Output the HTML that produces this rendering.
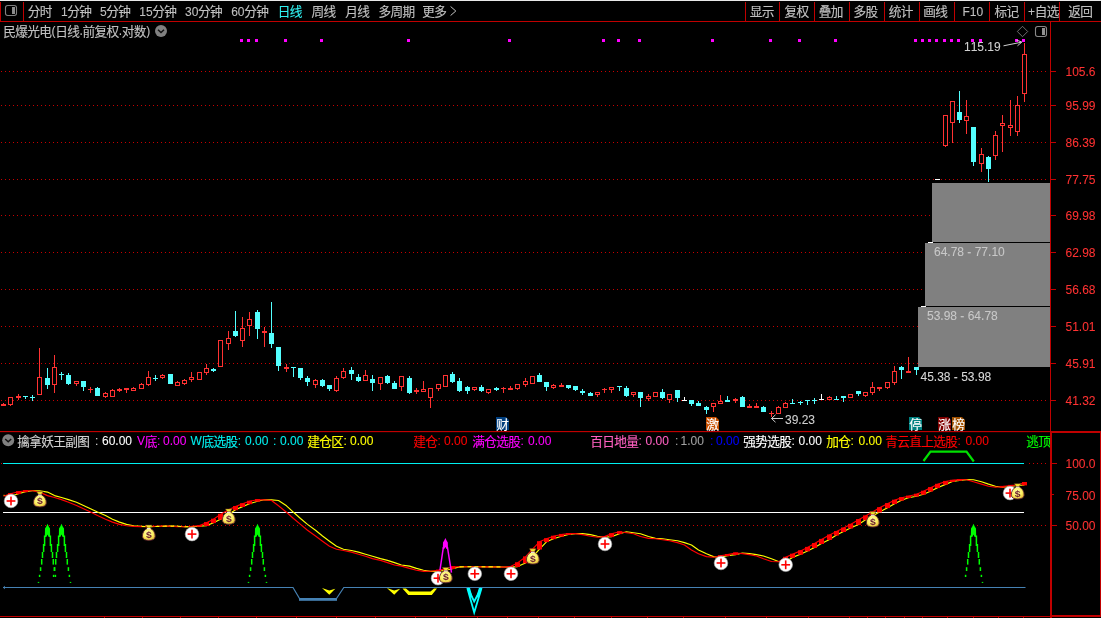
<!DOCTYPE html>
<html><head><meta charset="utf-8"><title>chart</title>
<style>html,body{margin:0;padding:0;background:#000;overflow:hidden}svg{display:block;will-change:transform}text{font-family:"Liberation Sans","Noto Sans CJK SC",sans-serif;font-kerning:none}</style>
</head><body>
<svg width="1101" height="618" viewBox="0 0 1101 618" shape-rendering="auto">
<rect x="0" y="0" width="1101" height="618" fill="#000" />
<rect x="0" y="0" width="1101" height="1" fill="#e8e8e8" />
<rect x="0" y="21" width="1101" height="1" fill="#c00000" />
<rect x="0" y="2" width="1" height="20" fill="#c00000" />
<rect x="23" y="2" width="1" height="20" fill="#c00000" />
<rect x="745" y="2" width="1" height="20" fill="#c00000" />
<rect x="779" y="2" width="1" height="20" fill="#c00000" />
<rect x="814" y="2" width="1" height="20" fill="#c00000" />
<rect x="849" y="2" width="1" height="20" fill="#c00000" />
<rect x="884" y="2" width="1" height="20" fill="#c00000" />
<rect x="919" y="2" width="1" height="20" fill="#c00000" />
<rect x="954" y="2" width="1" height="20" fill="#c00000" />
<rect x="989" y="2" width="1" height="20" fill="#c00000" />
<rect x="1024" y="2" width="1" height="20" fill="#c00000" />
<rect x="1059" y="2" width="1" height="20" fill="#c00000" />
<rect x="5.5" y="5.5" width="11" height="10" rx="2.2" fill="none" stroke="#808080" stroke-width="1.1"/>
<rect x="12" y="7" width="3" height="7" fill="#8c8c8c" />
<text x="27.67 39.67" y="16.40" font-size="12.66" fill="#c0c0c0" stroke="#c0c0c0" stroke-width="0.14">分时</text>
<text x="61.00" y="16.00" font-size="12" fill="#c0c0c0" stroke="#c0c0c0" stroke-width="0.08"  xml:space="preserve">1</text>
<text x="67.34 79.34" y="16.40" font-size="12.66" fill="#c0c0c0" stroke="#c0c0c0" stroke-width="0.14">分钟</text>
<text x="100.00" y="16.00" font-size="12" fill="#c0c0c0" stroke="#c0c0c0" stroke-width="0.08"  xml:space="preserve">5</text>
<text x="106.34 118.34" y="16.40" font-size="12.66" fill="#c0c0c0" stroke="#c0c0c0" stroke-width="0.14">分钟</text>
<text x="139.30" y="16.00" font-size="12" fill="#c0c0c0" stroke="#c0c0c0" stroke-width="0.08"  xml:space="preserve">15</text>
<text x="152.32 164.32" y="16.40" font-size="12.66" fill="#c0c0c0" stroke="#c0c0c0" stroke-width="0.14">分钟</text>
<text x="185.00" y="16.00" font-size="12" fill="#c0c0c0" stroke="#c0c0c0" stroke-width="0.08"  xml:space="preserve">30</text>
<text x="198.02 210.02" y="16.40" font-size="12.66" fill="#c0c0c0" stroke="#c0c0c0" stroke-width="0.14">分钟</text>
<text x="231.20" y="16.00" font-size="12" fill="#c0c0c0" stroke="#c0c0c0" stroke-width="0.08"  xml:space="preserve">60</text>
<text x="244.22 256.22" y="16.40" font-size="12.66" fill="#c0c0c0" stroke="#c0c0c0" stroke-width="0.14">分钟</text>
<text x="277.87 289.87" y="16.40" font-size="12.66" fill="#30f0f0" stroke="#30f0f0" stroke-width="0.14">日线</text>
<text x="311.47 323.47" y="16.40" font-size="12.66" fill="#c0c0c0" stroke="#c0c0c0" stroke-width="0.14">周线</text>
<text x="345.17 357.17" y="16.40" font-size="12.66" fill="#c0c0c0" stroke="#c0c0c0" stroke-width="0.14">月线</text>
<text x="378.47 390.47 402.47" y="16.40" font-size="12.66" fill="#c0c0c0" stroke="#c0c0c0" stroke-width="0.14">多周期</text>
<text x="422.17 434.17" y="16.40" font-size="12.66" fill="#c0c0c0" stroke="#c0c0c0" stroke-width="0.14">更多</text>
<polyline points="450.6,6.5 455.8,11 450.6,15.5" fill="none" stroke="#c0c0c0" stroke-width="1"/>
<text x="749.67 761.67" y="16.40" font-size="12.66" fill="#c0c0c0" stroke="#c0c0c0" stroke-width="0.14">显示</text>
<text x="784.47 796.47" y="16.40" font-size="12.66" fill="#c0c0c0" stroke="#c0c0c0" stroke-width="0.14">复权</text>
<text x="818.67 830.67" y="16.40" font-size="12.66" fill="#c0c0c0" stroke="#c0c0c0" stroke-width="0.14">叠加</text>
<text x="853.47 865.47" y="16.40" font-size="12.66" fill="#c0c0c0" stroke="#c0c0c0" stroke-width="0.14">多股</text>
<text x="888.67 900.67" y="16.40" font-size="12.66" fill="#c0c0c0" stroke="#c0c0c0" stroke-width="0.14">统计</text>
<text x="923.37 935.37" y="16.40" font-size="12.66" fill="#c0c0c0" stroke="#c0c0c0" stroke-width="0.14">画线</text>
<text x="962.50" y="16.00" font-size="12" fill="#c0c0c0" stroke="#c0c0c0" stroke-width="0.08"  xml:space="preserve">F10</text>
<text x="994.47 1006.47" y="16.40" font-size="12.66" fill="#c0c0c0" stroke="#c0c0c0" stroke-width="0.14">标记</text>
<text x="1028.00" y="16.00" font-size="12" fill="#c0c0c0" stroke="#c0c0c0" stroke-width="0.08"  xml:space="preserve">+</text>
<text x="1034.68 1046.68" y="16.40" font-size="12.66" fill="#c0c0c0" stroke="#c0c0c0" stroke-width="0.14">自选</text>
<text x="1068.17 1080.17" y="16.40" font-size="12.66" fill="#c0c0c0" stroke="#c0c0c0" stroke-width="0.14">返回</text>
<text x="3.17 15.17 27.17 39.17" y="35.80" font-size="12.66" fill="#c0c0c0" stroke="#c0c0c0" stroke-width="0.14">民爆光电</text>
<text x="51.50" y="35.40" font-size="12" fill="#c0c0c0" stroke="#c0c0c0" stroke-width="0.08"  xml:space="preserve">(</text>
<text x="55.17 67.17" y="35.80" font-size="12.66" fill="#c0c0c0" stroke="#c0c0c0" stroke-width="0.14">日线</text>
<text x="79.50" y="35.40" font-size="12" fill="#c0c0c0" stroke="#c0c0c0" stroke-width="0.08"  xml:space="preserve">.</text>
<text x="82.50 94.50 106.50" y="35.80" font-size="12.66" fill="#c0c0c0" stroke="#c0c0c0" stroke-width="0.14">前复权</text>
<text x="118.83" y="35.40" font-size="12" fill="#c0c0c0" stroke="#c0c0c0" stroke-width="0.08"  xml:space="preserve">.</text>
<text x="121.83 133.83" y="35.80" font-size="12.66" fill="#c0c0c0" stroke="#c0c0c0" stroke-width="0.14">对数</text>
<text x="146.16" y="35.40" font-size="12" fill="#c0c0c0" stroke="#c0c0c0" stroke-width="0.08"  xml:space="preserve">)</text>
<circle cx="161" cy="31" r="6" fill="#808080"/>
<polyline points="158,29.7 161,32.6 164,29.7" fill="none" stroke="#101010" stroke-width="1.4"/>
<rect x="240" y="39" width="3" height="3" fill="#ff00ff" />
<rect x="247" y="39" width="3" height="3" fill="#ff00ff" />
<rect x="255" y="39" width="3" height="3" fill="#ff00ff" />
<rect x="284" y="39" width="3" height="3" fill="#ff00ff" />
<rect x="320" y="39" width="3" height="3" fill="#ff00ff" />
<rect x="407" y="39" width="3" height="3" fill="#ff00ff" />
<rect x="508" y="39" width="3" height="3" fill="#ff00ff" />
<rect x="602" y="39" width="3" height="3" fill="#ff00ff" />
<rect x="617" y="39" width="3" height="3" fill="#ff00ff" />
<rect x="638" y="39" width="3" height="3" fill="#ff00ff" />
<rect x="711" y="39" width="3" height="3" fill="#ff00ff" />
<rect x="769" y="39" width="3" height="3" fill="#ff00ff" />
<rect x="798" y="39" width="3" height="3" fill="#ff00ff" />
<rect x="834" y="39" width="3" height="3" fill="#ff00ff" />
<rect x="914" y="39" width="3" height="3" fill="#ff00ff" />
<rect x="921" y="39" width="3" height="3" fill="#ff00ff" />
<rect x="928" y="39" width="3" height="3" fill="#ff00ff" />
<rect x="935" y="39" width="3" height="3" fill="#ff00ff" />
<rect x="943" y="39" width="3" height="3" fill="#ff00ff" />
<rect x="950" y="39" width="3" height="3" fill="#ff00ff" />
<rect x="957" y="39" width="3" height="3" fill="#ff00ff" />
<rect x="971" y="39" width="3" height="3" fill="#ff00ff" />
<rect x="979" y="39" width="3" height="3" fill="#ff00ff" />
<rect x="1015" y="39" width="3" height="3" fill="#ff00ff" />
<rect x="1022" y="39" width="3" height="3" fill="#ff00ff" />
<line x1="1" y1="71.5" x2="1046" y2="71.5" stroke="#c80000" stroke-width="1" stroke-dasharray="1 3"/>
<line x1="1" y1="105.5" x2="1046" y2="105.5" stroke="#c80000" stroke-width="1" stroke-dasharray="1 3"/>
<line x1="1" y1="142.5" x2="1046" y2="142.5" stroke="#c80000" stroke-width="1" stroke-dasharray="1 3"/>
<line x1="1" y1="179.5" x2="1046" y2="179.5" stroke="#c80000" stroke-width="1" stroke-dasharray="1 3"/>
<line x1="1" y1="215.5" x2="1046" y2="215.5" stroke="#c80000" stroke-width="1" stroke-dasharray="1 3"/>
<line x1="1" y1="252.5" x2="1046" y2="252.5" stroke="#c80000" stroke-width="1" stroke-dasharray="1 3"/>
<line x1="1" y1="289.5" x2="1046" y2="289.5" stroke="#c80000" stroke-width="1" stroke-dasharray="1 3"/>
<line x1="1" y1="326.5" x2="1046" y2="326.5" stroke="#c80000" stroke-width="1" stroke-dasharray="1 3"/>
<line x1="1" y1="363.5" x2="1046" y2="363.5" stroke="#c80000" stroke-width="1" stroke-dasharray="1 3"/>
<line x1="1" y1="400.5" x2="1046" y2="400.5" stroke="#c80000" stroke-width="1" stroke-dasharray="1 3"/>
<rect x="932" y="183" width="118" height="59" fill="#808080" />
<rect x="925" y="243" width="125" height="63" fill="#808080" />
<rect x="918" y="307" width="132" height="60" fill="#808080" />
<rect x="921" y="306" width="5" height="1" fill="#ffffff" />
<rect x="928" y="242" width="5" height="1" fill="#ffffff" />
<rect x="935" y="179" width="5" height="1" fill="#ffffff" />
<text x="934.00" y="256.00" font-size="12" fill="#c8c8c8" stroke="#c8c8c8" stroke-width="0.08"  xml:space="preserve">64.78 - 77.10</text>
<text x="927.00" y="320.00" font-size="12" fill="#c8c8c8" stroke="#c8c8c8" stroke-width="0.08"  xml:space="preserve">53.98 - 64.78</text>
<text x="920.50" y="380.70" font-size="12" fill="#d8d8d8" stroke="#d8d8d8" stroke-width="0.08"  xml:space="preserve">45.38 - 53.98</text>
<rect x="1050" y="22" width="1" height="410" fill="#c00000" />
<rect x="1051" y="71" width="5" height="1" fill="#c00000" />
<text x="1065.50" y="75.80" font-size="12" fill="#ff3232" stroke="#ff3232" stroke-width="0.08"  xml:space="preserve">105.6</text>
<rect x="1051" y="105" width="5" height="1" fill="#c00000" />
<text x="1065.50" y="109.80" font-size="12" fill="#ff3232" stroke="#ff3232" stroke-width="0.08"  xml:space="preserve">95.99</text>
<rect x="1051" y="142" width="5" height="1" fill="#c00000" />
<text x="1065.50" y="146.80" font-size="12" fill="#ff3232" stroke="#ff3232" stroke-width="0.08"  xml:space="preserve">86.39</text>
<rect x="1051" y="179" width="5" height="1" fill="#c00000" />
<text x="1065.50" y="183.80" font-size="12" fill="#ff3232" stroke="#ff3232" stroke-width="0.08"  xml:space="preserve">77.75</text>
<rect x="1051" y="215" width="5" height="1" fill="#c00000" />
<text x="1065.50" y="219.80" font-size="12" fill="#ff3232" stroke="#ff3232" stroke-width="0.08"  xml:space="preserve">69.98</text>
<rect x="1051" y="252" width="5" height="1" fill="#c00000" />
<text x="1065.50" y="256.80" font-size="12" fill="#ff3232" stroke="#ff3232" stroke-width="0.08"  xml:space="preserve">62.98</text>
<rect x="1051" y="289" width="5" height="1" fill="#c00000" />
<text x="1065.50" y="293.80" font-size="12" fill="#ff3232" stroke="#ff3232" stroke-width="0.08"  xml:space="preserve">56.68</text>
<rect x="1051" y="326" width="5" height="1" fill="#c00000" />
<text x="1065.50" y="330.80" font-size="12" fill="#ff3232" stroke="#ff3232" stroke-width="0.08"  xml:space="preserve">51.01</text>
<rect x="1051" y="363" width="5" height="1" fill="#c00000" />
<text x="1065.50" y="367.80" font-size="12" fill="#ff3232" stroke="#ff3232" stroke-width="0.08"  xml:space="preserve">45.91</text>
<rect x="1051" y="400" width="5" height="1" fill="#c00000" />
<text x="1065.50" y="404.80" font-size="12" fill="#ff3232" stroke="#ff3232" stroke-width="0.08"  xml:space="preserve">41.32</text>
<rect x="3" y="403" width="1" height="3" fill="#ff3232" />
<rect x="1" y="404" width="5" height="2" fill="#ff3232" />
<rect x="10" y="405" width="1" height="1" fill="#ff3232" />
<rect x="8.5" y="397.5" width="4" height="7" fill="#000" stroke="#ff3232" stroke-width="1"/>
<rect x="18" y="394" width="1" height="6" fill="#ff3232" />
<rect x="16" y="396" width="5" height="2" fill="#ff3232" />
<rect x="25" y="396" width="1" height="3" fill="#54ffff" />
<rect x="23" y="396" width="5" height="1" fill="#54ffff" />
<rect x="32" y="395" width="1" height="6" fill="#54ffff" />
<rect x="30" y="397" width="5" height="1" fill="#54ffff" />
<rect x="39" y="348" width="1" height="29" fill="#ff3232" />
<rect x="37.5" y="377.5" width="4" height="17" fill="#000" stroke="#ff3232" stroke-width="1"/>
<rect x="47" y="368" width="1" height="21" fill="#54ffff" />
<rect x="45" y="378" width="5" height="7" fill="#54ffff" />
<rect x="54" y="355" width="1" height="12" fill="#ff3232" />
<rect x="54" y="385" width="1" height="8" fill="#ff3232" />
<rect x="52.5" y="367.5" width="4" height="17" fill="#000" stroke="#ff3232" stroke-width="1"/>
<rect x="61" y="372" width="1" height="8" fill="#54ffff" />
<rect x="59" y="374" width="5" height="1" fill="#54ffff" />
<rect x="68" y="373" width="1" height="12" fill="#54ffff" />
<rect x="66" y="375" width="5" height="9" fill="#54ffff" />
<rect x="76" y="384" width="1" height="2" fill="#ff3232" />
<rect x="74.5" y="381.5" width="4" height="2" fill="#000" stroke="#ff3232" stroke-width="1"/>
<rect x="83" y="381" width="1" height="10" fill="#54ffff" />
<rect x="81" y="381" width="5" height="6" fill="#54ffff" />
<rect x="90" y="387" width="1" height="6" fill="#ff3232" />
<rect x="88" y="389" width="5" height="1" fill="#ff3232" />
<rect x="97" y="387" width="1" height="9" fill="#54ffff" />
<rect x="95" y="388" width="5" height="8" fill="#54ffff" />
<rect x="105" y="392" width="1" height="1" fill="#ff3232" />
<rect x="105" y="397" width="1" height="1" fill="#ff3232" />
<rect x="103.5" y="393.5" width="4" height="3" fill="#000" stroke="#ff3232" stroke-width="1"/>
<rect x="112" y="389" width="1" height="1" fill="#ff3232" />
<rect x="110.5" y="390.5" width="4" height="6" fill="#000" stroke="#ff3232" stroke-width="1"/>
<rect x="119" y="388" width="1" height="4" fill="#ff3232" />
<rect x="117" y="389" width="5" height="2" fill="#ff3232" />
<rect x="126" y="388" width="1" height="5" fill="#ff3232" />
<rect x="124" y="388" width="5" height="2" fill="#ff3232" />
<rect x="133" y="387" width="1" height="1" fill="#ff3232" />
<rect x="131.5" y="388.5" width="4" height="2" fill="#000" stroke="#ff3232" stroke-width="1"/>
<rect x="141" y="383" width="1" height="1" fill="#ff3232" />
<rect x="139.5" y="384.5" width="4" height="4" fill="#000" stroke="#ff3232" stroke-width="1"/>
<rect x="148" y="371" width="1" height="6" fill="#ff3232" />
<rect x="148" y="385" width="1" height="1" fill="#ff3232" />
<rect x="146.5" y="377.5" width="4" height="7" fill="#000" stroke="#ff3232" stroke-width="1"/>
<rect x="155" y="375" width="1" height="6" fill="#54ffff" />
<rect x="153" y="378" width="5" height="1" fill="#54ffff" />
<rect x="162" y="374" width="1" height="1" fill="#ff3232" />
<rect x="162" y="378" width="1" height="1" fill="#ff3232" />
<rect x="160.5" y="375.5" width="4" height="2" fill="#000" stroke="#ff3232" stroke-width="1"/>
<rect x="170" y="374" width="1" height="10" fill="#54ffff" />
<rect x="168" y="374" width="5" height="10" fill="#54ffff" />
<rect x="177" y="381" width="1" height="1" fill="#ff3232" />
<rect x="175.5" y="382.5" width="4" height="3" fill="#000" stroke="#ff3232" stroke-width="1"/>
<rect x="184" y="379" width="1" height="1" fill="#ff3232" />
<rect x="184" y="384" width="1" height="1" fill="#ff3232" />
<rect x="182.5" y="380.5" width="4" height="3" fill="#000" stroke="#ff3232" stroke-width="1"/>
<rect x="191" y="372" width="1" height="5" fill="#ff3232" />
<rect x="191" y="380" width="1" height="2" fill="#ff3232" />
<rect x="189.5" y="377.5" width="4" height="2" fill="#000" stroke="#ff3232" stroke-width="1"/>
<rect x="197.5" y="372.5" width="4" height="7" fill="#000" stroke="#ff3232" stroke-width="1"/>
<rect x="206" y="364" width="1" height="4" fill="#ff3232" />
<rect x="206" y="373" width="1" height="2" fill="#ff3232" />
<rect x="204.5" y="368.5" width="4" height="4" fill="#000" stroke="#ff3232" stroke-width="1"/>
<rect x="213" y="368" width="1" height="4" fill="#54ffff" />
<rect x="211" y="369" width="5" height="2" fill="#54ffff" />
<rect x="218.5" y="340.5" width="4" height="26" fill="#000" stroke="#ff3232" stroke-width="1"/>
<rect x="228" y="331" width="1" height="7" fill="#ff3232" />
<rect x="228" y="344" width="1" height="6" fill="#ff3232" />
<rect x="226.5" y="338.5" width="4" height="5" fill="#000" stroke="#ff3232" stroke-width="1"/>
<rect x="235" y="311" width="1" height="26" fill="#54ffff" />
<rect x="233" y="331" width="5" height="5" fill="#54ffff" />
<rect x="242" y="317" width="1" height="11" fill="#ff3232" />
<rect x="242" y="341" width="1" height="6" fill="#ff3232" />
<rect x="240.5" y="328.5" width="4" height="12" fill="#000" stroke="#ff3232" stroke-width="1"/>
<rect x="249" y="312" width="1" height="7" fill="#ff3232" />
<rect x="249" y="326" width="1" height="10" fill="#ff3232" />
<rect x="247.5" y="319.5" width="4" height="6" fill="#000" stroke="#ff3232" stroke-width="1"/>
<rect x="257" y="310" width="1" height="29" fill="#54ffff" />
<rect x="255" y="312" width="5" height="17" fill="#54ffff" />
<rect x="264" y="327" width="1" height="20" fill="#ff3232" />
<rect x="262" y="331" width="5" height="2" fill="#ff3232" />
<rect x="271" y="302" width="1" height="46" fill="#54ffff" />
<rect x="269" y="333" width="5" height="11" fill="#54ffff" />
<rect x="278" y="347" width="1" height="24" fill="#54ffff" />
<rect x="276" y="347" width="5" height="19" fill="#54ffff" />
<rect x="286" y="364" width="1" height="8" fill="#ff3232" />
<rect x="284" y="367" width="5" height="2" fill="#ff3232" />
<rect x="293" y="367" width="1" height="10" fill="#54ffff" />
<rect x="291" y="367" width="5" height="1" fill="#54ffff" />
<rect x="300" y="368" width="1" height="12" fill="#54ffff" />
<rect x="298" y="368" width="5" height="10" fill="#54ffff" />
<rect x="307" y="376" width="1" height="10" fill="#54ffff" />
<rect x="305" y="378" width="5" height="4" fill="#54ffff" />
<rect x="315" y="379" width="1" height="1" fill="#ff3232" />
<rect x="315" y="385" width="1" height="3" fill="#ff3232" />
<rect x="313.5" y="380.5" width="4" height="4" fill="#000" stroke="#ff3232" stroke-width="1"/>
<rect x="322" y="379" width="1" height="8" fill="#54ffff" />
<rect x="320" y="380" width="5" height="6" fill="#54ffff" />
<rect x="329" y="385" width="1" height="6" fill="#54ffff" />
<rect x="327" y="385" width="5" height="4" fill="#54ffff" />
<rect x="336" y="376" width="1" height="2" fill="#ff3232" />
<rect x="336" y="391" width="1" height="1" fill="#ff3232" />
<rect x="334.5" y="378.5" width="4" height="12" fill="#000" stroke="#ff3232" stroke-width="1"/>
<rect x="343" y="368" width="1" height="3" fill="#ff3232" />
<rect x="343" y="378" width="1" height="1" fill="#ff3232" />
<rect x="341.5" y="371.5" width="4" height="6" fill="#000" stroke="#ff3232" stroke-width="1"/>
<rect x="351" y="367" width="1" height="13" fill="#54ffff" />
<rect x="349" y="370" width="5" height="4" fill="#54ffff" />
<rect x="358" y="374" width="1" height="8" fill="#54ffff" />
<rect x="356" y="377" width="5" height="4" fill="#54ffff" />
<rect x="365" y="370" width="1" height="5" fill="#ff3232" />
<rect x="363.5" y="375.5" width="4" height="5" fill="#000" stroke="#ff3232" stroke-width="1"/>
<rect x="372" y="375" width="1" height="16" fill="#54ffff" />
<rect x="370" y="379" width="5" height="4" fill="#54ffff" />
<rect x="380" y="384" width="1" height="6" fill="#ff3232" />
<rect x="378.5" y="377.5" width="4" height="6" fill="#000" stroke="#ff3232" stroke-width="1"/>
<rect x="387" y="375" width="1" height="9" fill="#54ffff" />
<rect x="385" y="376" width="5" height="7" fill="#54ffff" />
<rect x="394" y="381" width="1" height="8" fill="#54ffff" />
<rect x="392" y="383" width="5" height="6" fill="#54ffff" />
<rect x="401" y="387" width="1" height="4" fill="#ff3232" />
<rect x="399.5" y="376.5" width="4" height="10" fill="#000" stroke="#ff3232" stroke-width="1"/>
<rect x="409" y="376" width="1" height="18" fill="#54ffff" />
<rect x="407" y="378" width="5" height="15" fill="#54ffff" />
<rect x="416" y="388" width="1" height="6" fill="#ff3232" />
<rect x="414" y="390" width="5" height="2" fill="#ff3232" />
<rect x="423" y="381" width="1" height="8" fill="#ff3232" />
<rect x="421.5" y="389.5" width="4" height="2" fill="#000" stroke="#ff3232" stroke-width="1"/>
<rect x="430" y="398" width="1" height="10" fill="#ff3232" />
<rect x="428.5" y="388.5" width="4" height="9" fill="#000" stroke="#ff3232" stroke-width="1"/>
<rect x="438" y="389" width="1" height="2" fill="#ff3232" />
<rect x="436.5" y="384.5" width="4" height="4" fill="#000" stroke="#ff3232" stroke-width="1"/>
<rect x="443.5" y="375.5" width="4" height="11" fill="#000" stroke="#ff3232" stroke-width="1"/>
<rect x="452" y="372" width="1" height="11" fill="#54ffff" />
<rect x="450" y="374" width="5" height="8" fill="#54ffff" />
<rect x="459" y="378" width="1" height="14" fill="#54ffff" />
<rect x="457" y="381" width="5" height="10" fill="#54ffff" />
<rect x="467" y="386" width="1" height="8" fill="#54ffff" />
<rect x="465" y="387" width="5" height="4" fill="#54ffff" />
<rect x="474" y="390" width="1" height="1" fill="#ff3232" />
<rect x="472.5" y="387.5" width="4" height="2" fill="#000" stroke="#ff3232" stroke-width="1"/>
<rect x="481" y="385" width="1" height="7" fill="#54ffff" />
<rect x="479" y="387" width="5" height="4" fill="#54ffff" />
<rect x="488" y="393" width="1" height="1" fill="#ff3232" />
<rect x="486.5" y="389.5" width="4" height="3" fill="#000" stroke="#ff3232" stroke-width="1"/>
<rect x="496" y="387" width="1" height="4" fill="#54ffff" />
<rect x="494" y="388" width="5" height="2" fill="#54ffff" />
<rect x="503" y="387" width="1" height="6" fill="#ff3232" />
<rect x="501" y="388" width="5" height="1" fill="#ff3232" />
<rect x="510" y="386" width="1" height="4" fill="#ff3232" />
<rect x="508" y="388" width="5" height="2" fill="#ff3232" />
<rect x="517" y="389" width="1" height="1" fill="#ff3232" />
<rect x="515.5" y="384.5" width="4" height="4" fill="#000" stroke="#ff3232" stroke-width="1"/>
<rect x="525" y="378" width="1" height="3" fill="#ff3232" />
<rect x="525" y="385" width="1" height="2" fill="#ff3232" />
<rect x="523.5" y="381.5" width="4" height="3" fill="#000" stroke="#ff3232" stroke-width="1"/>
<rect x="530.5" y="376.5" width="4" height="7" fill="#000" stroke="#ff3232" stroke-width="1"/>
<rect x="539" y="373" width="1" height="9" fill="#54ffff" />
<rect x="537" y="375" width="5" height="7" fill="#54ffff" />
<rect x="546" y="382" width="1" height="9" fill="#54ffff" />
<rect x="544" y="382" width="5" height="5" fill="#54ffff" />
<rect x="553" y="384" width="1" height="1" fill="#ff3232" />
<rect x="553" y="388" width="1" height="1" fill="#ff3232" />
<rect x="551.5" y="385.5" width="4" height="2" fill="#000" stroke="#ff3232" stroke-width="1"/>
<rect x="561" y="383" width="1" height="4" fill="#ff3232" />
<rect x="559" y="385" width="5" height="2" fill="#ff3232" />
<rect x="568" y="385" width="1" height="4" fill="#54ffff" />
<rect x="566" y="385" width="5" height="3" fill="#54ffff" />
<rect x="575" y="386" width="1" height="5" fill="#54ffff" />
<rect x="573" y="386" width="5" height="4" fill="#54ffff" />
<rect x="582" y="389" width="1" height="6" fill="#54ffff" />
<rect x="580" y="391" width="5" height="2" fill="#54ffff" />
<rect x="590" y="392" width="1" height="4" fill="#54ffff" />
<rect x="588" y="393" width="5" height="3" fill="#54ffff" />
<rect x="597" y="395" width="1" height="2" fill="#ff3232" />
<rect x="595.5" y="392.5" width="4" height="2" fill="#000" stroke="#ff3232" stroke-width="1"/>
<rect x="604" y="388" width="1" height="5" fill="#ff3232" />
<rect x="602" y="389" width="5" height="1" fill="#ff3232" />
<rect x="611" y="390" width="1" height="3" fill="#ff3232" />
<rect x="609.5" y="387.5" width="4" height="2" fill="#000" stroke="#ff3232" stroke-width="1"/>
<rect x="619" y="386" width="1" height="5" fill="#54ffff" />
<rect x="617" y="386" width="5" height="1" fill="#54ffff" />
<rect x="626" y="386" width="1" height="11" fill="#54ffff" />
<rect x="624" y="388" width="5" height="8" fill="#54ffff" />
<rect x="633" y="395" width="1" height="2" fill="#ff3232" />
<rect x="631.5" y="392.5" width="4" height="2" fill="#000" stroke="#ff3232" stroke-width="1"/>
<rect x="640" y="392" width="1" height="15" fill="#54ffff" />
<rect x="638" y="392" width="5" height="6" fill="#54ffff" />
<rect x="648" y="394" width="1" height="2" fill="#ff3232" />
<rect x="648" y="399" width="1" height="2" fill="#ff3232" />
<rect x="646.5" y="396.5" width="4" height="2" fill="#000" stroke="#ff3232" stroke-width="1"/>
<rect x="653.5" y="392.5" width="4" height="4" fill="#000" stroke="#ff3232" stroke-width="1"/>
<rect x="662" y="389" width="1" height="10" fill="#54ffff" />
<rect x="660" y="392" width="5" height="6" fill="#54ffff" />
<rect x="669" y="400" width="1" height="3" fill="#ff3232" />
<rect x="667.5" y="394.5" width="4" height="5" fill="#000" stroke="#ff3232" stroke-width="1"/>
<rect x="677" y="390" width="1" height="12" fill="#54ffff" />
<rect x="675" y="390" width="5" height="8" fill="#54ffff" />
<rect x="684" y="397" width="1" height="4" fill="#ffffff" />
<rect x="682" y="400" width="5" height="1" fill="#ffffff" />
<rect x="691" y="400" width="1" height="6" fill="#54ffff" />
<rect x="689" y="400" width="5" height="4" fill="#54ffff" />
<rect x="698" y="401" width="1" height="5" fill="#54ffff" />
<rect x="696" y="403" width="5" height="3" fill="#54ffff" />
<rect x="706" y="406" width="1" height="8" fill="#54ffff" />
<rect x="704" y="407" width="5" height="3" fill="#54ffff" />
<rect x="713" y="407" width="1" height="5" fill="#ff3232" />
<rect x="711.5" y="403.5" width="4" height="3" fill="#000" stroke="#ff3232" stroke-width="1"/>
<rect x="720" y="395" width="1" height="6" fill="#ff3232" />
<rect x="718.5" y="401.5" width="4" height="2" fill="#000" stroke="#ff3232" stroke-width="1"/>
<rect x="727" y="396" width="1" height="6" fill="#54ffff" />
<rect x="725" y="400" width="5" height="2" fill="#54ffff" />
<rect x="735" y="398" width="1" height="5" fill="#ff3232" />
<rect x="733" y="399" width="5" height="2" fill="#ff3232" />
<rect x="742" y="396" width="1" height="11" fill="#54ffff" />
<rect x="740" y="397" width="5" height="10" fill="#54ffff" />
<rect x="749" y="404" width="1" height="4" fill="#ff3232" />
<rect x="747" y="406" width="5" height="2" fill="#ff3232" />
<rect x="756" y="403" width="1" height="5" fill="#ff3232" />
<rect x="754" y="406" width="5" height="2" fill="#ff3232" />
<rect x="763" y="406" width="1" height="6" fill="#54ffff" />
<rect x="761" y="407" width="5" height="5" fill="#54ffff" />
<rect x="771" y="411" width="1" height="6" fill="#ff3232" />
<rect x="769" y="413" width="5" height="1" fill="#ff3232" />
<rect x="778" y="406" width="1" height="1" fill="#ff3232" />
<rect x="776.5" y="407.5" width="4" height="6" fill="#000" stroke="#ff3232" stroke-width="1"/>
<rect x="785" y="402" width="1" height="1" fill="#ff3232" />
<rect x="783.5" y="403.5" width="4" height="4" fill="#000" stroke="#ff3232" stroke-width="1"/>
<rect x="792" y="399" width="1" height="5" fill="#54ffff" />
<rect x="790" y="403" width="5" height="1" fill="#54ffff" />
<rect x="800" y="401" width="1" height="4" fill="#54ffff" />
<rect x="798" y="402" width="5" height="1" fill="#54ffff" />
<rect x="807" y="400" width="1" height="5" fill="#54ffff" />
<rect x="805" y="400" width="5" height="1" fill="#54ffff" />
<rect x="814" y="398" width="1" height="6" fill="#54ffff" />
<rect x="812" y="400" width="5" height="1" fill="#54ffff" />
<rect x="821" y="394" width="1" height="6" fill="#ffffff" />
<rect x="819" y="399" width="5" height="1" fill="#ffffff" />
<rect x="829" y="396" width="1" height="1" fill="#ff3232" />
<rect x="827.5" y="397.5" width="4" height="2" fill="#000" stroke="#ff3232" stroke-width="1"/>
<rect x="836" y="396" width="1" height="4" fill="#54ffff" />
<rect x="834" y="399" width="5" height="1" fill="#54ffff" />
<rect x="843" y="396" width="1" height="6" fill="#54ffff" />
<rect x="841" y="396" width="5" height="2" fill="#54ffff" />
<rect x="848.5" y="394.5" width="4" height="3" fill="#000" stroke="#ff3232" stroke-width="1"/>
<rect x="858" y="391" width="1" height="5" fill="#54ffff" />
<rect x="856" y="391" width="5" height="3" fill="#54ffff" />
<rect x="865" y="396" width="1" height="1" fill="#ff3232" />
<rect x="863.5" y="392.5" width="4" height="3" fill="#000" stroke="#ff3232" stroke-width="1"/>
<rect x="872" y="382" width="1" height="5" fill="#ff3232" />
<rect x="872" y="393" width="1" height="2" fill="#ff3232" />
<rect x="870.5" y="387.5" width="4" height="5" fill="#000" stroke="#ff3232" stroke-width="1"/>
<rect x="879" y="387" width="1" height="4" fill="#ff3232" />
<rect x="877" y="387" width="5" height="2" fill="#ff3232" />
<rect x="887" y="388" width="1" height="1" fill="#ff3232" />
<rect x="885.5" y="382.5" width="4" height="5" fill="#000" stroke="#ff3232" stroke-width="1"/>
<rect x="894" y="366" width="1" height="5" fill="#ff3232" />
<rect x="894" y="383" width="1" height="2" fill="#ff3232" />
<rect x="892.5" y="371.5" width="4" height="11" fill="#000" stroke="#ff3232" stroke-width="1"/>
<rect x="901" y="366" width="1" height="13" fill="#54ffff" />
<rect x="899" y="367" width="5" height="3" fill="#54ffff" />
<rect x="908" y="357" width="1" height="16" fill="#ff3232" />
<rect x="906" y="371" width="5" height="2" fill="#ff3232" />
<rect x="916" y="367" width="1" height="8" fill="#54ffff" />
<rect x="914" y="367" width="5" height="3" fill="#54ffff" />
<rect x="945" y="146" width="1" height="1" fill="#ff3232" />
<rect x="943.5" y="115.5" width="4" height="30" fill="#000" stroke="#ff3232" stroke-width="1"/>
<rect x="952" y="123" width="1" height="20" fill="#ff3232" />
<rect x="950.5" y="101.5" width="4" height="21" fill="#000" stroke="#ff3232" stroke-width="1"/>
<rect x="959" y="91" width="1" height="32" fill="#54ffff" />
<rect x="957" y="112" width="5" height="8" fill="#54ffff" />
<rect x="966" y="100" width="1" height="16" fill="#ff3232" />
<rect x="966" y="121" width="1" height="13" fill="#ff3232" />
<rect x="964.5" y="116.5" width="4" height="4" fill="#000" stroke="#ff3232" stroke-width="1"/>
<rect x="973" y="127" width="1" height="39" fill="#54ffff" />
<rect x="971" y="127" width="5" height="35" fill="#54ffff" />
<rect x="981" y="148" width="1" height="6" fill="#ff3232" />
<rect x="981" y="164" width="1" height="8" fill="#ff3232" />
<rect x="979.5" y="154.5" width="4" height="9" fill="#000" stroke="#ff3232" stroke-width="1"/>
<rect x="988" y="156" width="1" height="26" fill="#54ffff" />
<rect x="986" y="157" width="5" height="12" fill="#54ffff" />
<rect x="995" y="131" width="1" height="4" fill="#ff3232" />
<rect x="995" y="156" width="1" height="4" fill="#ff3232" />
<rect x="993.5" y="135.5" width="4" height="20" fill="#000" stroke="#ff3232" stroke-width="1"/>
<rect x="1002" y="115" width="1" height="8" fill="#ff3232" />
<rect x="1002" y="126" width="1" height="26" fill="#ff3232" />
<rect x="1000.5" y="123.5" width="4" height="2" fill="#000" stroke="#ff3232" stroke-width="1"/>
<rect x="1010" y="100" width="1" height="25" fill="#ff3232" />
<rect x="1010" y="128" width="1" height="8" fill="#ff3232" />
<rect x="1008.5" y="125.5" width="4" height="2" fill="#000" stroke="#ff3232" stroke-width="1"/>
<rect x="1017" y="96" width="1" height="9" fill="#ff3232" />
<rect x="1017" y="132" width="1" height="4" fill="#ff3232" />
<rect x="1015.5" y="105.5" width="4" height="26" fill="#000" stroke="#ff3232" stroke-width="1"/>
<rect x="1024" y="43" width="1" height="11" fill="#ff3232" />
<rect x="1024" y="94" width="1" height="8" fill="#ff3232" />
<rect x="1022.5" y="54.5" width="4" height="39" fill="#000" stroke="#ff3232" stroke-width="1"/>
<text x="964.00" y="50.60" font-size="12" fill="#d0d0d0" stroke="#d0d0d0" stroke-width="0.08"  xml:space="preserve">115.19</text>
<path d="M1003.5 45.8 L1021.5 42.2 M1016.5 40 L1021.8 42.1 L1017.5 45.8" fill="none" stroke="#d0d0d0" stroke-width="1"/>
<path d="M1022.5 26.3 L1027.7 31.5 L1022.5 36.7 L1017.3 31.5 Z" fill="none" stroke="#8a8a8a" stroke-width="0.8"/>
<rect x="1035.5" y="26.5" width="11" height="10" rx="2.2" fill="none" stroke="#888888" stroke-width="1.1"/>
<rect x="1042" y="28" width="3" height="7" fill="#909090" />
<text x="785.00" y="424.00" font-size="12" fill="#d0d0d0" stroke="#d0d0d0" stroke-width="0.08"  xml:space="preserve">39.23</text>
<path d="M783 418.5 L771.5 418.5 M775.5 414.8 L771.5 418.5 L775.5 422.2" fill="none" stroke="#d0d0d0" stroke-width="1"/>
<path d="M496 417 h10 l3 3 v10 h-13 z" fill="#003e7e"/>
<text x="496.17" y="428.60" font-size="12.66" fill="#ffffff" stroke="#ffffff" stroke-width="0.14">财</text>
<path d="M706 417 h10 l3 3 v10 h-13 z" fill="#c85000"/>
<text x="706.17" y="428.60" font-size="12.66" fill="#ffffff" stroke="#ffffff" stroke-width="0.14">激</text>
<path d="M909 417 h10 l3 3 v10 h-13 z" fill="#008080"/>
<text x="909.17" y="428.60" font-size="12.66" fill="#ffffff" stroke="#ffffff" stroke-width="0.14">停</text>
<path d="M938 417 h10 l3 3 v10 h-13 z" fill="#800000"/>
<text x="938.17" y="428.60" font-size="12.66" fill="#ffffff" stroke="#ffffff" stroke-width="0.14">涨</text>
<path d="M952 417 h10 l3 3 v10 h-13 z" fill="#a05000"/>
<text x="952.17" y="428.60" font-size="12.66" fill="#ffffff" stroke="#ffffff" stroke-width="0.14">榜</text>
<rect x="0" y="431" width="1050" height="1.15" fill="#c00000" />
<rect x="1050" y="431" width="51" height="2" fill="#c00000" />
<circle cx="8.2" cy="440.2" r="6" fill="#808080"/>
<polyline points="5.2,438.9 8.2,441.8 11.2,438.9" fill="none" stroke="#101010" stroke-width="1.4"/>
<text x="17.17 29.17 41.17 53.17 65.17 77.17" y="445.70" font-size="12.66" fill="#d0d0d0" stroke="#d0d0d0" stroke-width="0.14">擒拿妖王副图</text>
<text x="95.00" y="445.30" font-size="12" fill="#d0d0d0" stroke="#d0d0d0" stroke-width="0.08"  xml:space="preserve">:</text>
<text x="102.00" y="445.30" font-size="12" fill="#ffffff" stroke="#ffffff" stroke-width="0.08"  xml:space="preserve">60.00</text>
<text x="137.00" y="445.30" font-size="12" fill="#ff00ff" stroke="#ff00ff" stroke-width="0.08"  xml:space="preserve">V</text>
<text x="144.67" y="445.70" font-size="12.66" fill="#ff00ff" stroke="#ff00ff" stroke-width="0.14">底</text>
<text x="157.00" y="445.30" font-size="12" fill="#ff00ff" stroke="#ff00ff" stroke-width="0.08"  xml:space="preserve">:</text>
<text x="163.00" y="445.30" font-size="12" fill="#ff00ff" stroke="#ff00ff" stroke-width="0.08"  xml:space="preserve">0.00</text>
<text x="190.50" y="445.30" font-size="12" fill="#00f0f0" stroke="#00f0f0" stroke-width="0.08"  xml:space="preserve">W</text>
<text x="201.50 213.50 225.50" y="445.70" font-size="12.66" fill="#00f0f0" stroke="#00f0f0" stroke-width="0.14">底选股</text>
<text x="237.83" y="445.30" font-size="12" fill="#00f0f0" stroke="#00f0f0" stroke-width="0.08"  xml:space="preserve">:</text>
<text x="245.00" y="445.30" font-size="12" fill="#00f0f0" stroke="#00f0f0" stroke-width="0.08"  xml:space="preserve">0.00</text>
<text x="273.00" y="445.30" font-size="12" fill="#00f0f0" stroke="#00f0f0" stroke-width="0.08"  xml:space="preserve">:</text>
<text x="280.00" y="445.30" font-size="12" fill="#00f0f0" stroke="#00f0f0" stroke-width="0.08"  xml:space="preserve">0.00</text>
<text x="307.17 319.17 331.17" y="445.70" font-size="12.66" fill="#ffff00" stroke="#ffff00" stroke-width="0.14">建仓区</text>
<text x="343.50" y="445.30" font-size="12" fill="#ffff00" stroke="#ffff00" stroke-width="0.08"  xml:space="preserve">:</text>
<text x="350.00" y="445.30" font-size="12" fill="#ffff00" stroke="#ffff00" stroke-width="0.08"  xml:space="preserve">0.00</text>
<text x="413.17 425.17" y="445.70" font-size="12.66" fill="#ff0000" stroke="#ff0000" stroke-width="0.14">建仓</text>
<text x="437.50" y="445.30" font-size="12" fill="#ff0000" stroke="#ff0000" stroke-width="0.08"  xml:space="preserve">:</text>
<text x="444.00" y="445.30" font-size="12" fill="#ff0000" stroke="#ff0000" stroke-width="0.08"  xml:space="preserve">0.00</text>
<text x="472.17 484.17 496.17 508.17" y="445.70" font-size="12.66" fill="#ff00ff" stroke="#ff00ff" stroke-width="0.14">满仓选股</text>
<text x="520.50" y="445.30" font-size="12" fill="#ff00ff" stroke="#ff00ff" stroke-width="0.08"  xml:space="preserve">:</text>
<text x="528.00" y="445.30" font-size="12" fill="#ff00ff" stroke="#ff00ff" stroke-width="0.08"  xml:space="preserve">0.00</text>
<text x="590.17 602.17 614.17 626.17" y="445.70" font-size="12.66" fill="#ff60c0" stroke="#ff60c0" stroke-width="0.14">百日地量</text>
<text x="638.50" y="445.30" font-size="12" fill="#ff60c0" stroke="#ff60c0" stroke-width="0.08"  xml:space="preserve">:</text>
<text x="645.50" y="445.30" font-size="12" fill="#ff60c0" stroke="#ff60c0" stroke-width="0.08"  xml:space="preserve">0.00</text>
<text x="675.00" y="445.30" font-size="12" fill="#a0a0a0" stroke="#a0a0a0" stroke-width="0.08"  xml:space="preserve">:</text>
<text x="680.50" y="445.30" font-size="12" fill="#a0a0a0" stroke="#a0a0a0" stroke-width="0.08"  xml:space="preserve">1.00</text>
<text x="710.00" y="445.30" font-size="12" fill="#0000ff" stroke="#0000ff" stroke-width="0.08"  xml:space="preserve">:</text>
<text x="716.00" y="445.30" font-size="12" fill="#0000ff" stroke="#0000ff" stroke-width="0.08"  xml:space="preserve">0.00</text>
<text x="743.17 755.17 767.17 779.17" y="445.70" font-size="12.66" fill="#ffffff" stroke="#ffffff" stroke-width="0.14">强势选股</text>
<text x="791.50" y="445.30" font-size="12" fill="#ffffff" stroke="#ffffff" stroke-width="0.08"  xml:space="preserve">:</text>
<text x="798.50" y="445.30" font-size="12" fill="#ffffff" stroke="#ffffff" stroke-width="0.08"  xml:space="preserve">0.00</text>
<text x="826.17 838.17" y="445.70" font-size="12.66" fill="#ffff00" stroke="#ffff00" stroke-width="0.14">加仓</text>
<text x="850.50" y="445.30" font-size="12" fill="#ffff00" stroke="#ffff00" stroke-width="0.08"  xml:space="preserve">:</text>
<text x="858.50" y="445.30" font-size="12" fill="#ffff00" stroke="#ffff00" stroke-width="0.08"  xml:space="preserve">0.00</text>
<text x="885.17 897.17 909.17 921.17 933.17 945.17" y="445.70" font-size="12.66" fill="#ff0000" stroke="#ff0000" stroke-width="0.14">青云直上选股</text>
<text x="957.50" y="445.30" font-size="12" fill="#ff0000" stroke="#ff0000" stroke-width="0.08"  xml:space="preserve">:</text>
<text x="965.50" y="445.30" font-size="12" fill="#ff0000" stroke="#ff0000" stroke-width="0.08"  xml:space="preserve">0.00</text>
<clipPath id="cl"><rect x="0" y="432" width="1050" height="30"/></clipPath>
<g clip-path="url(#cl)"><text x="1026.17 1038.17" y="445.70" font-size="12.66" fill="#00ff00" stroke="#00ff00" stroke-width="0.14">逃顶</text></g>
<polyline points="923.5,461 930.5,451.6 966.5,451.6 973.8,461.5" fill="none" stroke="#00e000" stroke-width="2.2"/>
<rect x="1" y="463" width="1" height="1" fill="#c80000" />
<rect x="3" y="463" width="1021" height="1" fill="#00f0f0" />
<line x1="1029" y1="463.5" x2="1046" y2="463.5" stroke="#c80000" stroke-width="1" stroke-dasharray="1 3"/>
<rect x="3" y="512" width="1021" height="1" fill="#ffffff" />
<line x1="1" y1="525.5" x2="1046" y2="525.5" stroke="#c80000" stroke-width="1" stroke-dasharray="1 3"/>
<path d="M3 587.5 H293 L299.5 598.5 M336.5 598.5 L343.8 587.5 H1025.5" fill="none" stroke="#4682b4" stroke-width="1.2"/>
<rect x="299" y="598" width="38" height="2.8" fill="#4682b4" />
<path d="M5 586 L3.3 587.5 L5 589" fill="none" stroke="#4682b4" stroke-width="0.8"/>
<path d="M322 588 L329.3 590.5 L335.3 588.7 L329.3 594.7 Z" fill="#ffff00"/>
<path d="M386.9 588 L394.2 590.5 L400.2 588.7 L394.2 594.7 Z" fill="#ffff00"/>
<path d="M402.5 588.5 L406 588.5 L409.5 591.6 L430.5 591.6 L434 588.5 L437 588.5 L431.8 595 L408.3 595 Z" fill="#ffff00"/>
<path d="M467.3 588 L474.2 612.6 L481.6 588 M467.6 588 L474.2 601.5 L481.3 588" fill="none" stroke="#00ffff" stroke-width="1.8" stroke-linejoin="miter"/>
<path d="M467 588 L470 588 L472.5 597 L470.5 597.5 Z M481.9 588 L478.9 588 L476.2 597 L478.3 597.5 Z" fill="#00ffff"/>
<polyline points="3.5,495.3 10.5,496.3 18.5,493.7 25.5,491.8 32.5,490.7 39.5,490.8 47.5,492.1 54.5,495.6 61.5,497.5 68.5,499.6 76.5,502.2 83.5,505.5 90.5,508.7 97.5,512.0 105.5,515.5 112.5,519.2 119.5,522.1 126.5,524.4 133.5,525.7 141.5,526.4 148.5,526.6 155.5,526.5 162.5,526.2 170.5,526.1 177.5,526.3 184.5,526.7 191.5,526.6 199.5,526.3 206.5,525.6 213.5,522.7 220.5,519.3 228.5,514.4 235.5,509.7 242.5,506.6 249.5,503.8 257.5,501.3 264.5,499.7 271.5,499.9 278.5,500.5 286.5,505.8 293.5,512.3 300.5,518.5 307.5,524.4 315.5,530.3 322.5,536.0 329.5,541.2 336.5,546.3 343.5,549.3 351.5,550.5 358.5,552.1 365.5,554.2 372.5,556.3 380.5,558.6 387.5,560.4 394.5,562.6 401.5,565.0 409.5,566.1 416.5,568.4 423.5,570.2 430.5,571.4 438.5,571.3 445.5,570.2 452.5,568.7 459.5,566.9 467.5,566.7 474.5,566.7 481.5,566.8 488.5,566.8 496.5,566.9 503.5,567.0 510.5,567.1 517.5,566.6 525.5,562.9 532.5,557.0 539.5,549.1 546.5,541.8 553.5,538.8 561.5,536.3 568.5,534.5 575.5,533.6 582.5,533.6 590.5,534.6 597.5,536.2 604.5,537.2 611.5,536.6 619.5,533.8 626.5,531.8 633.5,532.7 640.5,533.7 648.5,536.5 655.5,538.4 662.5,538.7 669.5,539.7 677.5,540.8 684.5,542.6 691.5,545.0 698.5,550.0 706.5,553.8 713.5,556.6 720.5,557.3 727.5,555.7 735.5,554.6 742.5,553.0 749.5,553.6 756.5,554.6 763.5,556.0 771.5,558.8 778.5,561.5 785.5,561.7 792.5,557.4 800.5,554.3 807.5,550.9 814.5,547.5 821.5,543.6 829.5,539.5 836.5,535.1 843.5,531.6 850.5,528.1 858.5,524.4 865.5,519.7 872.5,516.0 879.5,512.0 887.5,507.8 894.5,503.7 901.5,500.3 908.5,497.7 916.5,496.2 923.5,494.3 930.5,491.3 937.5,487.7 945.5,484.4 952.5,481.5 959.5,480.4 966.5,479.6 973.5,479.7 981.5,481.7 988.5,484.1 995.5,486.2 1002.5,487.3 1010.5,486.5 1017.5,485.5 1024.5,485.0" fill="none" stroke="#ffff00" stroke-width="1.15" stroke-linejoin="round"/>
<rect x="8" y="493.1" width="5" height="3.6" fill="#ff0000" />
<rect x="16" y="491.2" width="5" height="2.9" fill="#ff0000" />
<rect x="23" y="490.1" width="5" height="2.1" fill="#ff0000" />
<rect x="197" y="525" width="5" height="1.7" fill="#ff0000" />
<rect x="204" y="522.1" width="5" height="3.9" fill="#ff0000" />
<rect x="211" y="518.7" width="5" height="4.4" fill="#ff0000" />
<rect x="218" y="513.8" width="5" height="5.9" fill="#ff0000" />
<rect x="226" y="509.1" width="5" height="5.7" fill="#ff0000" />
<rect x="233" y="506" width="5" height="4.2" fill="#ff0000" />
<rect x="240" y="503.2" width="5" height="3.8" fill="#ff0000" />
<rect x="247" y="500.7" width="5" height="3.5" fill="#ff0000" />
<rect x="255" y="499.1" width="5" height="2.6" fill="#ff0000" />
<rect x="436" y="569.6" width="5" height="2.1" fill="#ff0000" />
<rect x="443" y="568.1" width="5" height="2.6" fill="#ff0000" />
<rect x="450" y="566.3" width="5" height="2.7" fill="#ff0000" />
<rect x="508" y="566" width="5" height="1.5" fill="#ff0000" />
<rect x="515" y="562.3" width="5" height="4.7" fill="#ff0000" />
<rect x="523" y="556.4" width="5" height="6.9" fill="#ff0000" />
<rect x="530" y="548.5" width="5" height="9" fill="#ff0000" />
<rect x="537" y="541.2" width="5" height="8.3" fill="#ff0000" />
<rect x="544" y="538.2" width="5" height="3.9" fill="#ff0000" />
<rect x="551" y="535.7" width="5" height="3.5" fill="#ff0000" />
<rect x="559" y="533.9" width="5" height="2.8" fill="#ff0000" />
<rect x="566" y="533" width="5" height="1.9" fill="#ff0000" />
<rect x="602" y="536" width="5" height="1.6" fill="#ff0000" />
<rect x="609" y="533.2" width="5" height="3.9" fill="#ff0000" />
<rect x="617" y="531.2" width="5" height="2.9" fill="#ff0000" />
<rect x="718" y="555.1" width="5" height="2.6" fill="#ff0000" />
<rect x="725" y="554" width="5" height="2.1" fill="#ff0000" />
<rect x="733" y="552.4" width="5" height="2.6" fill="#ff0000" />
<rect x="783" y="556.8" width="5" height="5.3" fill="#ff0000" />
<rect x="790" y="553.7" width="5" height="4.1" fill="#ff0000" />
<rect x="798" y="550.3" width="5" height="4.4" fill="#ff0000" />
<rect x="805" y="546.9" width="5" height="4.4" fill="#ff0000" />
<rect x="812" y="543" width="5" height="4.9" fill="#ff0000" />
<rect x="819" y="538.9" width="5" height="5.1" fill="#ff0000" />
<rect x="827" y="534.5" width="5" height="5.4" fill="#ff0000" />
<rect x="834" y="531" width="5" height="4.5" fill="#ff0000" />
<rect x="841" y="527.5" width="5" height="4.5" fill="#ff0000" />
<rect x="848" y="523.8" width="5" height="4.7" fill="#ff0000" />
<rect x="856" y="519.1" width="5" height="5.7" fill="#ff0000" />
<rect x="863" y="515.4" width="5" height="4.8" fill="#ff0000" />
<rect x="870" y="511.4" width="5" height="5" fill="#ff0000" />
<rect x="877" y="507.2" width="5" height="5.2" fill="#ff0000" />
<rect x="885" y="503.1" width="5" height="5" fill="#ff0000" />
<rect x="892" y="499.7" width="5" height="4.4" fill="#ff0000" />
<rect x="899" y="497.1" width="5" height="3.6" fill="#ff0000" />
<rect x="906" y="495.6" width="5" height="2.5" fill="#ff0000" />
<rect x="914" y="493.7" width="5" height="2.9" fill="#ff0000" />
<rect x="921" y="490.7" width="5" height="4" fill="#ff0000" />
<rect x="928" y="487.1" width="5" height="4.5" fill="#ff0000" />
<rect x="935" y="483.8" width="5" height="4.3" fill="#ff0000" />
<rect x="943" y="480.9" width="5" height="3.8" fill="#ff0000" />
<rect x="950" y="479.8" width="5" height="2.1" fill="#ff0000" />
<rect x="957" y="479" width="5" height="1.8" fill="#ff0000" />
<rect x="1000" y="485.9" width="5" height="1.8" fill="#ff0000" />
<rect x="1008" y="484.9" width="5" height="2" fill="#ff0000" />
<rect x="1015" y="484.4" width="5" height="1.5" fill="#ff0000" />
<rect x="1022" y="482" width="5" height="3.4" fill="#ff0000" />
<polyline points="3.5,496.3 10.5,493.7 18.5,491.8 25.5,490.7 32.5,490.8 39.5,492.1 47.5,495.6 54.5,497.5 61.5,499.6 68.5,502.2 76.5,505.5 83.5,508.7 90.5,512.0 97.5,515.5 105.5,519.2 112.5,522.1 119.5,524.4 126.5,525.7 133.5,526.4 141.5,526.6 148.5,526.5 155.5,526.2 162.5,526.1 170.5,526.3 177.5,526.7 184.5,526.6 191.5,526.3 199.5,525.6 206.5,522.7 213.5,519.3 220.5,514.4 228.5,509.7 235.5,506.6 242.5,503.8 249.5,501.3 257.5,499.7 264.5,499.9 271.5,500.5 278.5,505.8 286.5,512.3 293.5,518.5 300.5,524.4 307.5,530.3 315.5,536.0 322.5,541.2 329.5,546.3 336.5,549.3 343.5,550.5 351.5,552.1 358.5,554.2 365.5,556.3 372.5,558.6 380.5,560.4 387.5,562.6 394.5,565.0 401.5,566.1 409.5,568.4 416.5,570.2 423.5,571.4 430.5,571.3 438.5,570.2 445.5,568.7 452.5,566.9 459.5,566.7 467.5,566.7 474.5,566.8 481.5,566.8 488.5,566.9 496.5,567.0 503.5,567.1 510.5,566.6 517.5,562.9 525.5,557.0 532.5,549.1 539.5,541.8 546.5,538.8 553.5,536.3 561.5,534.5 568.5,533.6 575.5,533.6 582.5,534.6 590.5,536.2 597.5,537.2 604.5,536.6 611.5,533.8 619.5,531.8 626.5,532.7 633.5,533.7 640.5,536.5 648.5,538.4 655.5,538.7 662.5,539.7 669.5,540.8 677.5,542.6 684.5,545.0 691.5,550.0 698.5,553.8 706.5,556.6 713.5,557.3 720.5,555.7 727.5,554.6 735.5,553.0 742.5,553.6 749.5,554.6 756.5,556.0 763.5,558.8 771.5,561.5 778.5,561.7 785.5,557.4 792.5,554.3 800.5,550.9 807.5,547.5 814.5,543.6 821.5,539.5 829.5,535.1 836.5,531.6 843.5,528.1 850.5,524.4 858.5,519.7 865.5,516.0 872.5,512.0 879.5,507.8 887.5,503.7 894.5,500.3 901.5,497.7 908.5,496.2 916.5,494.3 923.5,491.3 930.5,487.7 937.5,484.4 945.5,481.5 952.5,480.4 959.5,479.6 966.5,479.7 973.5,481.7 981.5,484.1 988.5,486.2 995.5,487.3 1002.5,486.5 1010.5,485.5 1017.5,485.0 1024.5,482.6" fill="none" stroke="#ff0000" stroke-width="1.15" stroke-linejoin="round"/>
<line x1="141.5" y1="526.4" x2="145.3" y2="526.5" stroke="#ffff00" stroke-width="1.15"/>
<line x1="148.5" y1="526.6" x2="152.3" y2="526.6" stroke="#ffff00" stroke-width="1.15"/>
<line x1="155.5" y1="526.5" x2="159.3" y2="526.4" stroke="#ffff00" stroke-width="1.15"/>
<line x1="162.5" y1="526.2" x2="166.9" y2="526.1" stroke="#ffff00" stroke-width="1.15"/>
<line x1="170.5" y1="526.1" x2="174.3" y2="526.2" stroke="#ffff00" stroke-width="1.15"/>
<line x1="177.5" y1="526.3" x2="181.3" y2="526.5" stroke="#ffff00" stroke-width="1.15"/>
<line x1="184.5" y1="526.7" x2="188.3" y2="526.6" stroke="#ffff00" stroke-width="1.15"/>
<line x1="459.5" y1="566.9" x2="463.9" y2="566.8" stroke="#ffff00" stroke-width="1.15"/>
<line x1="467.5" y1="566.7" x2="471.4" y2="566.7" stroke="#ffff00" stroke-width="1.15"/>
<line x1="474.5" y1="566.7" x2="478.4" y2="566.8" stroke="#ffff00" stroke-width="1.15"/>
<line x1="481.5" y1="566.8" x2="485.4" y2="566.8" stroke="#ffff00" stroke-width="1.15"/>
<line x1="488.5" y1="566.8" x2="492.9" y2="566.8" stroke="#ffff00" stroke-width="1.15"/>
<line x1="496.5" y1="566.9" x2="500.4" y2="566.9" stroke="#ffff00" stroke-width="1.15"/>
<path d="M47.5 523.7 L46.3 526.5 L45 528.5 L44.8 537 L46.3 537 L47.5 534.5 L48.7 537 L50.2 537 L50 528.5 L48.7 526.5 Z" fill="#00ff00"/>
<rect x="43.85" y="535.5" width="1.5" height="10.5" fill="#00ff00" />
<rect x="42.85" y="544" width="1.5" height="8" fill="#00ff00" />
<rect x="41.75" y="552" width="1.5" height="6" fill="#00ff00" />
<rect x="40.95" y="559" width="1.5" height="5.6" fill="#00ff00" />
<rect x="39.85" y="567.2" width="1.5" height="3.8" fill="#00ff00" />
<rect x="38.85" y="574.8" width="1.5" height="2.2" fill="#00ff00" />
<rect x="37.75" y="581.9" width="1.5" height="1" fill="#00ff00" />
<rect x="49.65" y="535.5" width="1.5" height="10.5" fill="#00ff00" />
<rect x="50.65" y="544" width="1.5" height="8" fill="#00ff00" />
<rect x="51.75" y="552" width="1.5" height="6" fill="#00ff00" />
<rect x="52.55" y="559" width="1.5" height="5.6" fill="#00ff00" />
<rect x="53.65" y="567.2" width="1.5" height="3.8" fill="#00ff00" />
<rect x="54.65" y="574.8" width="1.5" height="2.2" fill="#00ff00" />
<path d="M61.5 523.7 L60.3 526.5 L59 528.5 L58.8 537 L60.3 537 L61.5 534.5 L62.7 537 L64.2 537 L64 528.5 L62.7 526.5 Z" fill="#00ff00"/>
<rect x="57.85" y="535.5" width="1.5" height="10.5" fill="#00ff00" />
<rect x="56.85" y="544" width="1.5" height="8" fill="#00ff00" />
<rect x="55.75" y="552" width="1.5" height="6" fill="#00ff00" />
<rect x="54.95" y="559" width="1.5" height="5.6" fill="#00ff00" />
<rect x="53.85" y="567.2" width="1.5" height="3.8" fill="#00ff00" />
<rect x="52.85" y="574.8" width="1.5" height="2.2" fill="#00ff00" />
<rect x="63.65" y="535.5" width="1.5" height="10.5" fill="#00ff00" />
<rect x="64.65" y="544" width="1.5" height="8" fill="#00ff00" />
<rect x="65.75" y="552" width="1.5" height="6" fill="#00ff00" />
<rect x="66.55" y="559" width="1.5" height="5.6" fill="#00ff00" />
<rect x="67.65" y="567.2" width="1.5" height="3.8" fill="#00ff00" />
<rect x="68.65" y="574.8" width="1.5" height="2.2" fill="#00ff00" />
<rect x="69.75" y="581.9" width="1.5" height="1" fill="#00ff00" />
<path d="M257.5 523.7 L256.3 526.5 L255 528.5 L254.8 537 L256.3 537 L257.5 534.5 L258.7 537 L260.2 537 L260 528.5 L258.7 526.5 Z" fill="#00ff00"/>
<rect x="253.85" y="535.5" width="1.5" height="10.5" fill="#00ff00" />
<rect x="252.85" y="544" width="1.5" height="8" fill="#00ff00" />
<rect x="251.75" y="552" width="1.5" height="6" fill="#00ff00" />
<rect x="250.95" y="559" width="1.5" height="5.6" fill="#00ff00" />
<rect x="249.85" y="567.2" width="1.5" height="3.8" fill="#00ff00" />
<rect x="248.85" y="574.8" width="1.5" height="2.2" fill="#00ff00" />
<rect x="247.75" y="581.9" width="1.5" height="1" fill="#00ff00" />
<rect x="259.65" y="535.5" width="1.5" height="10.5" fill="#00ff00" />
<rect x="260.65" y="544" width="1.5" height="8" fill="#00ff00" />
<rect x="261.75" y="552" width="1.5" height="6" fill="#00ff00" />
<rect x="262.55" y="559" width="1.5" height="5.6" fill="#00ff00" />
<rect x="263.65" y="567.2" width="1.5" height="3.8" fill="#00ff00" />
<rect x="264.65" y="574.8" width="1.5" height="2.2" fill="#00ff00" />
<rect x="265.75" y="581.9" width="1.5" height="1" fill="#00ff00" />
<path d="M973.5 523.7 L972.3 526.5 L971 528.5 L970.8 537 L972.3 537 L973.5 534.5 L974.7 537 L976.2 537 L976 528.5 L974.7 526.5 Z" fill="#00ff00"/>
<rect x="969.85" y="535.5" width="1.5" height="10.5" fill="#00ff00" />
<rect x="968.85" y="544" width="1.5" height="8" fill="#00ff00" />
<rect x="967.75" y="552" width="1.5" height="6" fill="#00ff00" />
<rect x="966.95" y="559" width="1.5" height="5.6" fill="#00ff00" />
<rect x="965.85" y="567.2" width="1.5" height="3.8" fill="#00ff00" />
<rect x="964.85" y="574.8" width="1.5" height="2.2" fill="#00ff00" />
<rect x="975.65" y="535.5" width="1.5" height="10.5" fill="#00ff00" />
<rect x="976.65" y="544" width="1.5" height="8" fill="#00ff00" />
<rect x="977.75" y="552" width="1.5" height="6" fill="#00ff00" />
<rect x="978.55" y="559" width="1.5" height="5.6" fill="#00ff00" />
<rect x="979.65" y="567.2" width="1.5" height="3.8" fill="#00ff00" />
<rect x="980.65" y="574.8" width="1.5" height="2.2" fill="#00ff00" />
<rect x="981.75" y="581.9" width="1.5" height="1" fill="#00ff00" />
<path d="M445.4 538 L444.2 540.5 L443 542.5 L442.8 549 L444.2 549 L445.4 547 L446.6 549 L448 549 L447.8 542.5 L446.6 540.5 Z" fill="#ff00ff"/>
<path d="M443.4 547 L440 570 M447.4 547 L451.5 572.6" fill="none" stroke="#ff00ff" stroke-width="1.5"/>
<radialGradient id="bag" cx="0.45" cy="0.4" r="0.65"><stop offset="0" stop-color="#ffffb0"/><stop offset="0.6" stop-color="#fcf060"/><stop offset="1" stop-color="#e0b030"/></radialGradient>
<circle cx="11" cy="501" r="6.8" fill="#ffffff" stroke="#b0b0b0" stroke-width="0.6"/>
<rect x="6.6" y="500.2" width="8.8" height="1.6" fill="#ff0000" />
<rect x="10.2" y="496.6" width="1.6" height="8.8" fill="#ff0000" />
<circle cx="192" cy="534.1" r="6.8" fill="#ffffff" stroke="#b0b0b0" stroke-width="0.6"/>
<rect x="187.6" y="533.3" width="8.8" height="1.6" fill="#ff0000" />
<rect x="191.2" y="529.7" width="1.6" height="8.8" fill="#ff0000" />
<circle cx="438" cy="578.2" r="6.8" fill="#ffffff" stroke="#b0b0b0" stroke-width="0.6"/>
<rect x="433.6" y="577.4" width="8.8" height="1.6" fill="#ff0000" />
<rect x="437.2" y="573.8" width="1.6" height="8.8" fill="#ff0000" />
<circle cx="474.8" cy="573.8" r="6.8" fill="#ffffff" stroke="#b0b0b0" stroke-width="0.6"/>
<rect x="470.4" y="573" width="8.8" height="1.6" fill="#ff0000" />
<rect x="474" y="569.4" width="1.6" height="8.8" fill="#ff0000" />
<circle cx="511" cy="573.8" r="6.8" fill="#ffffff" stroke="#b0b0b0" stroke-width="0.6"/>
<rect x="506.6" y="573" width="8.8" height="1.6" fill="#ff0000" />
<rect x="510.2" y="569.4" width="1.6" height="8.8" fill="#ff0000" />
<circle cx="605" cy="544" r="6.8" fill="#ffffff" stroke="#b0b0b0" stroke-width="0.6"/>
<rect x="600.6" y="543.2" width="8.8" height="1.6" fill="#ff0000" />
<rect x="604.2" y="539.6" width="1.6" height="8.8" fill="#ff0000" />
<circle cx="721" cy="563" r="6.8" fill="#ffffff" stroke="#b0b0b0" stroke-width="0.6"/>
<rect x="716.6" y="562.2" width="8.8" height="1.6" fill="#ff0000" />
<rect x="720.2" y="558.6" width="1.6" height="8.8" fill="#ff0000" />
<circle cx="785.7" cy="564.8" r="6.8" fill="#ffffff" stroke="#b0b0b0" stroke-width="0.6"/>
<rect x="781.3" y="564" width="8.8" height="1.6" fill="#ff0000" />
<rect x="784.9" y="560.4" width="1.6" height="8.8" fill="#ff0000" />
<circle cx="1010" cy="493.1" r="6.8" fill="#ffffff" stroke="#b0b0b0" stroke-width="0.6"/>
<rect x="1005.6" y="492.3" width="8.8" height="1.6" fill="#ff0000" />
<rect x="1009.2" y="488.7" width="1.6" height="8.8" fill="#ff0000" />
<path d="M36.5 491.6 L43.3 491.6 L41.1 494.7 L38.7 494.7 Z" fill="#f4e428" stroke="#6a3a20" stroke-width="0.5"/>
<path d="M38.3 494.9 C35.4 495.9 33.3 499.5 33.5 503.1 C33.7 505.9 36.4 506.9 39.9 506.9 C43.4 506.9 46.1 505.9 46.3 503.1 C46.5 499.5 44.4 495.9 41.5 494.9 Z" fill="url(#bag)" stroke="#5a2430" stroke-width="0.9"/>
<rect x="38.1" y="494.6" width="3.6" height="1" fill="#fff4f4"/>
<text x="39.9" y="504.5" font-size="9" font-weight="bold" fill="#702030" text-anchor="middle" transform="translate(39.9 0) scale(1.15 1) translate(-39.9 0)">$</text>
<path d="M145.4 525.1 L152.2 525.1 L150 528.2 L147.6 528.2 Z" fill="#f4e428" stroke="#6a3a20" stroke-width="0.5"/>
<path d="M147.2 528.4 C144.3 529.4 142.2 533 142.4 536.6 C142.6 539.4 145.3 540.4 148.8 540.4 C152.3 540.4 155 539.4 155.2 536.6 C155.4 533 153.3 529.4 150.4 528.4 Z" fill="url(#bag)" stroke="#5a2430" stroke-width="0.9"/>
<rect x="147" y="528.1" width="3.6" height="1" fill="#fff4f4"/>
<text x="148.8" y="538" font-size="9" font-weight="bold" fill="#702030" text-anchor="middle" transform="translate(148.8 0) scale(1.15 1) translate(-148.8 0)">$</text>
<path d="M225.4 508.9 L232.2 508.9 L230 512 L227.6 512 Z" fill="#f4e428" stroke="#6a3a20" stroke-width="0.5"/>
<path d="M227.2 512.2 C224.3 513.2 222.2 516.8 222.4 520.4 C222.6 523.2 225.3 524.2 228.8 524.2 C232.3 524.2 235 523.2 235.2 520.4 C235.4 516.8 233.3 513.2 230.4 512.2 Z" fill="url(#bag)" stroke="#5a2430" stroke-width="0.9"/>
<rect x="227" y="511.9" width="3.6" height="1" fill="#fff4f4"/>
<text x="228.8" y="521.8" font-size="9" font-weight="bold" fill="#702030" text-anchor="middle" transform="translate(228.8 0) scale(1.15 1) translate(-228.8 0)">$</text>
<path d="M442.4 567.5 L449.2 567.5 L447 570.6 L444.6 570.6 Z" fill="#f4e428" stroke="#6a3a20" stroke-width="0.5"/>
<path d="M444.2 570.8 C441.3 571.8 439.2 575.4 439.4 579 C439.6 581.8 442.3 582.8 445.8 582.8 C449.3 582.8 452 581.8 452.2 579 C452.4 575.4 450.3 571.8 447.4 570.8 Z" fill="url(#bag)" stroke="#5a2430" stroke-width="0.9"/>
<rect x="444" y="570.5" width="3.6" height="1" fill="#fff4f4"/>
<text x="445.8" y="580.4" font-size="9" font-weight="bold" fill="#702030" text-anchor="middle" transform="translate(445.8 0) scale(1.15 1) translate(-445.8 0)">$</text>
<path d="M529.4 548.8 L536.2 548.8 L534 551.9 L531.6 551.9 Z" fill="#f4e428" stroke="#6a3a20" stroke-width="0.5"/>
<path d="M531.2 552.1 C528.3 553.1 526.2 556.7 526.4 560.3 C526.6 563.1 529.3 564.1 532.8 564.1 C536.3 564.1 539 563.1 539.2 560.3 C539.4 556.7 537.3 553.1 534.4 552.1 Z" fill="url(#bag)" stroke="#5a2430" stroke-width="0.9"/>
<rect x="531" y="551.8" width="3.6" height="1" fill="#fff4f4"/>
<text x="532.8" y="561.7" font-size="9" font-weight="bold" fill="#702030" text-anchor="middle" transform="translate(532.8 0) scale(1.15 1) translate(-532.8 0)">$</text>
<path d="M869.4 511.7 L876.2 511.7 L874 514.8 L871.6 514.8 Z" fill="#f4e428" stroke="#6a3a20" stroke-width="0.5"/>
<path d="M871.2 515 C868.3 516 866.2 519.6 866.4 523.2 C866.6 526 869.3 527 872.8 527 C876.3 527 879 526 879.2 523.2 C879.4 519.6 877.3 516 874.4 515 Z" fill="url(#bag)" stroke="#5a2430" stroke-width="0.9"/>
<rect x="871" y="514.7" width="3.6" height="1" fill="#fff4f4"/>
<text x="872.8" y="524.6" font-size="9" font-weight="bold" fill="#702030" text-anchor="middle" transform="translate(872.8 0) scale(1.15 1) translate(-872.8 0)">$</text>
<path d="M1014.3 483.7 L1021.1 483.7 L1018.9 486.8 L1016.5 486.8 Z" fill="#f4e428" stroke="#6a3a20" stroke-width="0.5"/>
<path d="M1016.1 487 C1013.2 488 1011.1 491.6 1011.3 495.2 C1011.5 498 1014.2 499 1017.7 499 C1021.2 499 1023.9 498 1024.1 495.2 C1024.3 491.6 1022.2 488 1019.3 487 Z" fill="url(#bag)" stroke="#5a2430" stroke-width="0.9"/>
<rect x="1015.9" y="486.7" width="3.6" height="1" fill="#fff4f4"/>
<text x="1017.7" y="496.6" font-size="9" font-weight="bold" fill="#702030" text-anchor="middle" transform="translate(1017.7 0) scale(1.15 1) translate(-1017.7 0)">$</text>
<rect x="1052" y="463" width="5" height="1" fill="#c00000" />
<text x="1065.50" y="467.80" font-size="12" fill="#ff3232" stroke="#ff3232" stroke-width="0.08"  xml:space="preserve">100.0</text>
<rect x="1052" y="494" width="2" height="1" fill="#c00000" />
<text x="1065.50" y="500.00" font-size="12" fill="#ff3232" stroke="#ff3232" stroke-width="0.08"  xml:space="preserve">75.00</text>
<rect x="1052" y="525" width="5" height="1" fill="#c00000" />
<text x="1065.50" y="529.80" font-size="12" fill="#ff3232" stroke="#ff3232" stroke-width="0.08"  xml:space="preserve">50.00</text>
<rect x="0" y="616" width="1051" height="1" fill="#c00000" />
<rect x="104" y="616" width="1" height="2" fill="#c00000" />
<rect x="142" y="616" width="1" height="2" fill="#c00000" />
<rect x="180" y="616" width="1" height="2" fill="#c00000" />
<rect x="218" y="616" width="1" height="2" fill="#c00000" />
<rect x="256" y="616" width="1" height="2" fill="#c00000" />
<rect x="296" y="616" width="1" height="2" fill="#c00000" />
<rect x="336" y="616" width="1" height="2" fill="#c00000" />
<rect x="375" y="616" width="1" height="2" fill="#c00000" />
<rect x="415" y="616" width="1" height="2" fill="#c00000" />
<rect x="446" y="616" width="1" height="2" fill="#c00000" />
<rect x="477" y="616" width="1" height="2" fill="#c00000" />
<rect x="507" y="616" width="1" height="2" fill="#c00000" />
<rect x="538" y="616" width="1" height="2" fill="#c00000" />
<rect x="574" y="616" width="1" height="2" fill="#c00000" />
<rect x="611" y="616" width="1" height="2" fill="#c00000" />
<rect x="647" y="616" width="1" height="2" fill="#c00000" />
<rect x="683" y="616" width="1" height="2" fill="#c00000" />
<rect x="725" y="616" width="1" height="2" fill="#c00000" />
<rect x="766" y="616" width="1" height="2" fill="#c00000" />
<rect x="808" y="616" width="1" height="2" fill="#c00000" />
<rect x="849" y="616" width="1" height="2" fill="#c00000" />
<rect x="867" y="616" width="1" height="2" fill="#c00000" />
<rect x="885" y="616" width="1" height="2" fill="#c00000" />
<rect x="904" y="616" width="1" height="2" fill="#c00000" />
<rect x="922" y="616" width="1" height="2" fill="#c00000" />
<rect x="947" y="616" width="1" height="2" fill="#c00000" />
<rect x="973" y="616" width="1" height="2" fill="#c00000" />
<rect x="998" y="616" width="1" height="2" fill="#c00000" />
<rect x="1023" y="616" width="1" height="2" fill="#c00000" />
<rect x="1050" y="432" width="2" height="186" fill="#c00000" />
<rect x="1050" y="615" width="51" height="2" fill="#c00000" />
<rect x="1100" y="432" width="1" height="185" fill="#c00000" />
</svg>
</body></html>
